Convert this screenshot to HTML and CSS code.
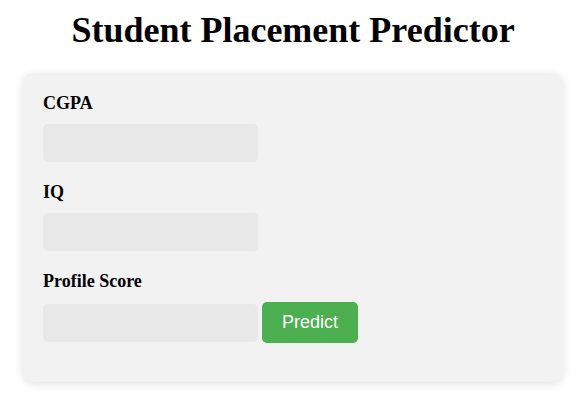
FILE: index.html
```html
<!DOCTYPE html>
<html lang="en">
<head>
<meta charset="utf-8">
<title>Student Placement Predictor</title>
<link rel="stylesheet" href="styles.css">
</head>
<body>
  <main class="page">
    <h1 class="title">Student Placement Predictor</h1>
    <form class="card" onsubmit="return false;">
      <label class="label" for="cgpa">CGPA</label>
      <div class="row">
        <input class="field" id="cgpa" type="text">
      </div>
      <label class="label" for="iq">IQ</label>
      <div class="row">
        <input class="field" id="iq" type="text">
      </div>
      <label class="label" for="profile">Profile Score</label>
      <div class="row">
        <input class="field" id="profile" type="text">
        <button class="btn" type="submit">Predict</button>
      </div>
    </form>
  </main>
</body>
</html>
```

FILE: styles.css
```css
html, body {
  background: #ffffff;
}
body {
  margin: 0;
  font-family: "Liberation Serif", "Times New Roman", serif;
  color: #000;
}
.page {
  display: flex;
  flex-direction: column;
  padding: 10px 19px 20px 23px;
}
.title {
  font-family: "Liberation Serif", "Times New Roman", serif;
  font-size: 36px;
  font-weight: bold;
  line-height: 41px;
  text-align: center;
  margin: 0 0 22px;
}
.card {
  display: flex;
  flex-direction: column;
  align-items: flex-start;
  box-sizing: border-box;
  height: 309px;
  padding: 20px;
  background: #f2f2f2;
  border-radius: 10px;
  box-shadow: 0 2px 10px rgba(0, 0, 0, 0.12);
}
.label {
  display: block;
  font-size: 18px;
  font-weight: bold;
  line-height: 21px;
  margin-bottom: 10px;
}
.row {
  display: flex;
  align-items: center;
  gap: 4px;
  margin-bottom: 20px;
}
.field {
  box-sizing: border-box;
  width: 215px;
  height: 38px;
  border: none;
  border-radius: 5px;
  background: #e8e8e8;
  padding: 0 10px;
  font-size: 16px;
  outline: none;
}
.btn {
  box-sizing: border-box;
  width: 96px;
  height: 41px;
  border: none;
  border-radius: 5px;
  background: #4caf50;
  color: #ffffff;
  font-family: "Liberation Sans", Arial, sans-serif;
  font-size: 18px;
  padding: 0;
  cursor: pointer;
}
```
